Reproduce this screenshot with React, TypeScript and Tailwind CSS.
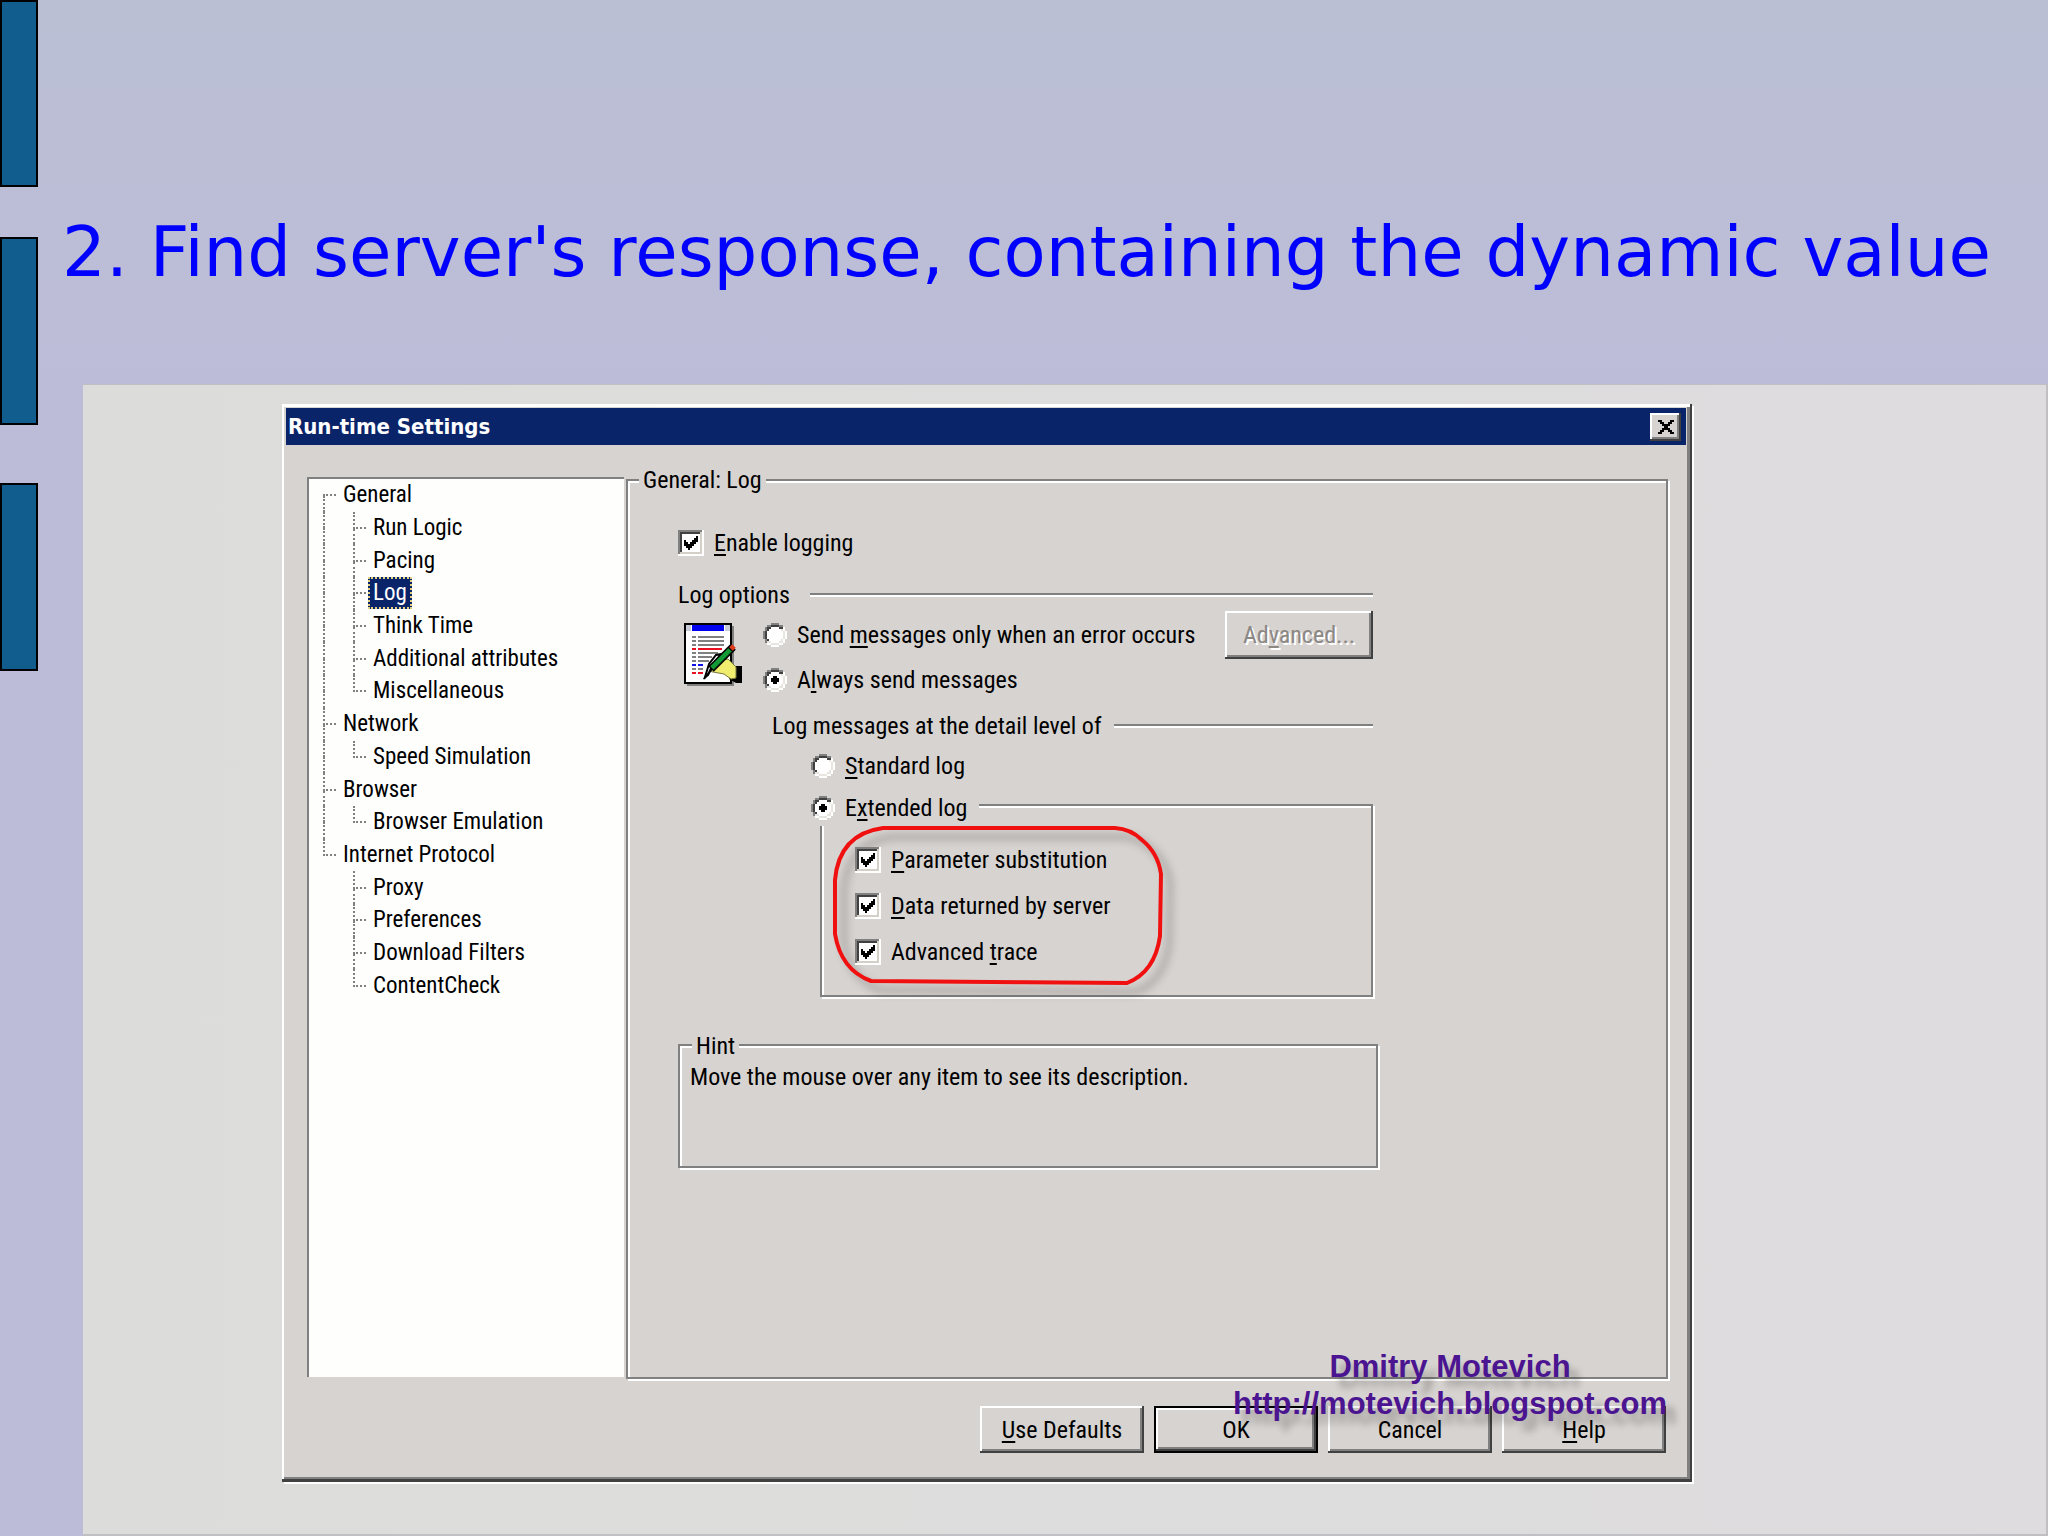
import type { ReactNode } from 'react'

type TreeRow = {
  label: string
  child?: boolean
  root: 'start' | 'through' | 'end' | 'none'
  last?: boolean
  selected?: boolean
}

const treeRows: TreeRow[] = [
  { label: 'General', root: 'start' },
  { label: 'Run Logic', child: true, root: 'through' },
  { label: 'Pacing', child: true, root: 'through' },
  { label: 'Log', child: true, root: 'through', selected: true },
  { label: 'Think Time', child: true, root: 'through' },
  { label: 'Additional attributes', child: true, root: 'through' },
  { label: 'Miscellaneous', child: true, root: 'through', last: true },
  { label: 'Network', root: 'through' },
  { label: 'Speed Simulation', child: true, root: 'through', last: true },
  { label: 'Browser', root: 'through' },
  { label: 'Browser Emulation', child: true, root: 'through', last: true },
  { label: 'Internet Protocol', root: 'end' },
  { label: 'Proxy', child: true, root: 'none' },
  { label: 'Preferences', child: true, root: 'none' },
  { label: 'Download Filters', child: true, root: 'none' },
  { label: 'ContentCheck', child: true, root: 'none', last: true },
]

const raised =
  'shadow-[inset_-2px_-2px_#404040,inset_2px_2px_#fff,inset_-4px_-4px_#808080]'

/** Underlined shortcut letter */
function Key({ children }: { children: ReactNode }) {
  return (
    <span className="underline decoration-2 underline-offset-[3px] [text-decoration-skip-ink:none]">
      {children}
    </span>
  )
}

/** Dotted connector: upper half, lower half and the branch to the label */
function Guide({ up, down, branch }: { up?: boolean; down?: boolean; branch?: boolean }) {
  return (
    <span className="flex w-[13px] flex-col self-stretch">
      <span
        className={`flex-1 border-dotted border-[#808080] ${up ? 'border-l-2' : ''} ${branch ? 'border-b-2' : ''}`}
      />
      <span className={`flex-1 border-dotted border-[#808080] ${down ? 'border-l-2' : ''}`} />
    </span>
  )
}

function Tree() {
  return (
    <nav
      aria-label="Settings"
      className="mb-[2px] w-[317px] shrink-0 border-t-2 border-l-2 border-[#808080] bg-[#fefefd] pl-[14px]"
    >
      <ul className="flex h-[523px] flex-col text-[23px] leading-7">
        {treeRows.map((row) => (
          <li key={row.label} className="flex flex-1 items-center">
            <Guide
              up={row.root === 'through' || row.root === 'end'}
              down={row.root === 'start' || row.root === 'through'}
              branch={!row.child}
            />
            {row.child && (
              <span className="ml-[17px] flex self-stretch">
                <Guide up down={!row.last} branch />
              </span>
            )}
            <a
              href="#"
              className={
                row.selected
                  ? 'ml-[2px] border-2 border-dotted border-[#e0d080] bg-[#0a246a] px-[3px] text-white'
                  : 'ml-[2px] px-[5px]'
              }
            >
              {row.label}
            </a>
          </li>
        ))}
      </ul>
    </nav>
  )
}

function Checkbox({ children }: { children: ReactNode }) {
  return (
    <label className="flex h-[26px] items-center gap-[10px]">
      <span className="group relative size-[26px] shrink-0">
        <input type="checkbox" defaultChecked className="absolute inset-0 size-full appearance-none" />
        <svg viewBox="0 0 13 13" className="pointer-events-none absolute inset-0 size-full" shapeRendering="crispEdges">
          <path fill="#fff" d="M0 0h13v13H0z" />
          <path fill="#808080" d="M0 0h12v1H1v11H0z" />
          <path fill="#404040" d="M1 1h10v1H2v9H1z" />
          <path fill="#d4d0c8" d="M11 1h1v11H1v-1h10z" />
          <path
            className="invisible group-has-checked:visible"
            fill="#000"
            d="M3 5h1v3H3zM4 6h1v3H4zM5 7h1v3H5zM6 6h1v3H6zM7 5h1v3H7zM8 4h1v3H8zM9 3h1v3H9z"
          />
        </svg>
      </span>
      <span>{children}</span>
    </label>
  )
}

function Radio({ name, checked, children }: { name: string; checked?: boolean; children: ReactNode }) {
  return (
    <label className="flex h-6 items-center gap-[10px]">
      <span className="group relative size-6 shrink-0">
        <input type="radio" name={name} defaultChecked={checked} className="absolute inset-0 size-full appearance-none" />
        <svg viewBox="0 0 12 12" className="pointer-events-none absolute inset-0 size-full" shapeRendering="crispEdges">
          <path fill="#fff" d="M4 2h4v1h1v1h1v4H9v1H8v1H4V9H3V8H2V4h1V3h1z" />
          <path fill="#808080" d="M4 0h4v1H4zM2 1h2v1H2zM8 1h2v1H8zM1 2h1v2H1zM0 4h1v4H0zM1 8h1v2H1z" />
          <path fill="#404040" d="M4 1h4v1H4zM2 2h2v1H2zM8 2h2v1H8zM2 3h1v1H2zM1 4h1v4H1zM2 8h1v1H2z" />
          <path fill="#e8e5e0" d="M9 3h1v1H9zM10 4h1v4h-1zM9 8h1v1H9zM8 9h2v1H8zM2 9h2v1H2zM4 10h4v1H4z" />
          <path fill="#fff" d="M10 2h1v2h-1zM11 4h1v4h-1zM10 8h1v2h-1zM8 10h2v1H8zM2 10h2v1H2zM4 11h4v1H4z" />
          <path className="invisible group-has-checked:visible" fill="#000" d="M5 4h2v1h1v2H7v1H5V7H4V5h1z" />
        </svg>
      </span>
      <span>{children}</span>
    </label>
  )
}

function Rule() {
  return <span className="h-1 flex-1 border-t-2 border-b-2 border-t-[#808080] border-b-white" />
}

function Button({ children, primary }: { children: ReactNode; primary?: boolean }) {
  return (
    <button
      type="button"
      className={
        primary
          ? 'h-[47px] w-[164px] border-2 border-black shadow-[inset_-2px_-2px_#404040,inset_2px_2px_#fff,inset_-4px_-4px_#808080]'
          : `h-[47px] w-[164px] ${raised}`
      }
    >
      {children}
    </button>
  )
}

function LogIcon() {
  return (
    <svg viewBox="0 0 60 64" className="h-16 w-[60px]">
      <path fill="#808080" d="M3 3h47v60H3z" />
      <path fill="#000" d="M0 0h48v61H0z" />
      <path fill="#fff" d="M2 2h44v57H2z" />
      <path fill="#c8ccd8" d="M2 2h5v6H2zM41 2h5v6h-5z" />
      <path fill="#0000f0" d="M8 2h32v6H8z" />
      <path
        fill="#808080"
        d="M8 13h4v2H8zM14 13h26v2H14zM8 17h4v2H8zM14 17h26v2H14zM8 21h4v2H8zM14 21h26v2H14zM8 29h4v2H8zM14 29h20v2H14zM8 33h4v2H8zM14 33h14v2H14zM8 37h4v2H8zM14 37h11v2H14zM8 45h4v2H8zM14 45h5v2h-5z"
      />
      <path fill="#e81020" d="M8 25h4v2H8zM14 25h24v2H14zM8 49h4v2H8zM14 49h5v2h-5z" />
      <path fill="#1010e8" d="M8 41h4v2H8zM14 41h5v2h-5z" />
      <path fill="#000" d="M51 43h7v17h-6l-7-4z" />
      <path fill="#f0ec70" stroke="#77773a" d="M25 48l14-11 5-1 8 8v11l-5 1-7-5-11-2z" />
      <path fill="#fff" stroke="#000" strokeWidth="2" d="M37 31l-5 1-7 9-4 13 3-2 4-9z" />
      <path stroke="#000" strokeWidth="8" d="M27 46L49 24" />
      <path stroke="#129a34" strokeWidth="5" d="M28 45L46 27" />
      <path stroke="#0a5a20" strokeWidth="1" d="M30 46L48 28" />
      <path stroke="#e03818" strokeWidth="5" d="M47 26l3-3" />
      <path stroke="#000" strokeWidth="2" d="M20 56l8-10" />
    </svg>
  )
}

const frame = 'relative border-2 border-[#808080] shadow-[inset_2px_2px_#fff,2px_2px_#fff]'

function LogSettings() {
  return (
    <fieldset className={`mt-[2px] min-w-0 flex-1 pt-[49px] pl-[50px] ${frame}`}>
      <legend className="absolute -top-4 left-[11px] bg-[#d7d3d0] px-1">General: Log</legend>

      <Checkbox>
        <Key>E</Key>nable logging
      </Checkbox>

      <div className="w-[695px]">
        <div className="mt-[27px] flex h-6 items-center gap-5">
          Log options
          <Rule />
        </div>

        <div className="mt-1 flex">
          <div className="w-[85px] shrink-0 pt-3 pl-[6px]">
            <LogIcon />
          </div>
          <div className="flex-1">
            <div className="flex h-12 items-center justify-between">
              <Radio name="send">
                Send <Key>m</Key>essages only when an error occurs
              </Radio>
              <button
                type="button"
                disabled
                className={`h-12 w-[148px] text-[#8c8884] [text-shadow:2px_2px_#fff] ${raised}`}
              >
                Ad<Key>v</Key>anced...
              </button>
            </div>
            <div className="mt-[9px]">
              <Radio name="send" checked>
                A<Key>l</Key>ways send messages
              </Radio>
            </div>
            <div className="mt-[22px] ml-[9px] flex h-6 items-center gap-3">
              Log messages at the detail level of
              <Rule />
            </div>
            <div className="mt-4 ml-12">
              <Radio name="level">
                <Key>S</Key>tandard log
              </Radio>
            </div>

            <fieldset className={`mt-[26px] ml-[57px] flex flex-col gap-5 pt-[41px] pb-[30px] pl-[33px] ${frame}`}>
              <legend className="absolute -top-[10px] -left-[11px] bg-[#d7d3d0] pr-3 pb-[6px]">
                <Radio name="level" checked>
                  E<Key>x</Key>tended log
                </Radio>
              </legend>
              <svg
                viewBox="0 0 330 160"
                fill="none"
                className="pointer-events-none absolute top-5 left-[11px] h-[160px] w-[330px] overflow-visible drop-shadow-[9px_9px_4px_rgba(0,0,0,0.3)]"
              >
                <path
                  stroke="#f01010"
                  strokeWidth="4"
                  d="M50 2H282Q298 3 309 14Q325 27 328 48L327 110Q322 146 294 157L38 155Q8 144 2 108V54Q6 8 50 2z"
                />
              </svg>
              <Checkbox>
                <Key>P</Key>arameter substitution
              </Checkbox>
              <Checkbox>
                <Key>D</Key>ata returned by server
              </Checkbox>
              <Checkbox>
                Advanced <Key>t</Key>race
              </Checkbox>
            </fieldset>
          </div>
        </div>
      </div>

      <fieldset className={`mt-[47px] h-[124px] w-[700px] pt-4 pl-[10px] ${frame}`}>
        <legend className="absolute -top-[15px] left-[12px] bg-[#d7d3d0] px-1">Hint</legend>
        <p>Move the mouse over any item to see its description.</p>
      </fieldset>
    </fieldset>
  )
}

function SettingsDialog() {
  return (
    <div
      role="dialog"
      aria-labelledby="dialog-title"
      className="relative flex flex-1 flex-col bg-[#d7d3d0] p-1 pr-[6px] pb-[29px] font-['Roboto_Condensed','Liberation_Sans',sans-serif] text-[24px] leading-[30px] text-black shadow-[inset_-2px_-3px_#404040,inset_2px_3px_#fff,inset_-5px_-5px_#808080,2px_2px_#fff]"
    >
      <div className="flex h-[37px] items-center justify-between bg-[#0a246a] pr-[5px] pl-[2px]">
        <h2
          id="dialog-title"
          className="font-['DejaVu_Sans_Condensed','DejaVu_Sans',sans-serif] text-[22px] font-bold text-white"
        >
          Run-time Settings
        </h2>
        <button type="button" aria-label="Close" className={`grid h-7 w-[31px] place-items-center bg-[#d7d3d0] ${raised}`}>
          <svg viewBox="0 0 8 7" className="h-[14px] w-4" shapeRendering="crispEdges">
            <path d="M0 0h2v1h1v1h2V1h1V0h2v1H7v1H6v1H5v1h1v1h1v1h1v1H6V6H5V5H3v1H2v1H0V6h1V5h1V4h1V3H2V2H1V1H0z" />
          </svg>
        </button>
      </div>

      <div className="mt-8 flex flex-1 gap-[2px] pr-[18px] pl-[21px]">
        <Tree />
        <LogSettings />
      </div>

      <div className="mt-[27px] flex justify-end gap-[10px] pr-[20px]">
        <Button>
          <Key>U</Key>se Defaults
        </Button>
        <Button primary>OK</Button>
        <Button>Cancel</Button>
        <Button>
          <Key>H</Key>elp
        </Button>
      </div>

      <div className="pointer-events-none absolute right-[25px] bottom-[60px] text-center font-['Liberation_Sans',sans-serif] text-[31px] leading-[37px] font-bold text-[#4b1490] [text-shadow:9px_10px_7px_rgba(0,0,0,0.28)]">
        <p>Dmitry Motevich</p>
        <a href="#">http://motevich.blogspot.com</a>
      </div>
    </div>
  )
}

export default function App() {
  return (
    <div className="flex min-h-screen bg-linear-to-b from-[#babfd4] via-[#bcbdd6] via-15% to-[#bcbcd9] to-30%">
      <div className="flex w-[38px] shrink-0 flex-col">
        <span className="h-[187px] border-2 border-black bg-[#115e8e]" />
        <span className="mt-[50px] h-[188px] border-2 border-black bg-[#115e8e]" />
        <span className="mt-[58px] h-[188px] border-2 border-black bg-[#115e8e]" />
      </div>

      <main className="flex flex-1 flex-col">
        <h1 className="pt-[212px] pb-[92px] pl-6 font-['DejaVu_Sans',sans-serif] text-[69px] leading-[80px] whitespace-nowrap text-[#0000ff]">
          2. Find server's response, containing the dynamic value
        </h1>
        <section className="ml-[45px] flex flex-1 flex-col border-t border-r-2 border-b-2 border-[#c0c0c4] bg-linear-to-r from-[#dcdddb] to-[#dedcde] pt-[19px] pr-[354px] pb-[52px] pl-[199px]">
          <SettingsDialog />
        </section>
      </main>
    </div>
  )
}
